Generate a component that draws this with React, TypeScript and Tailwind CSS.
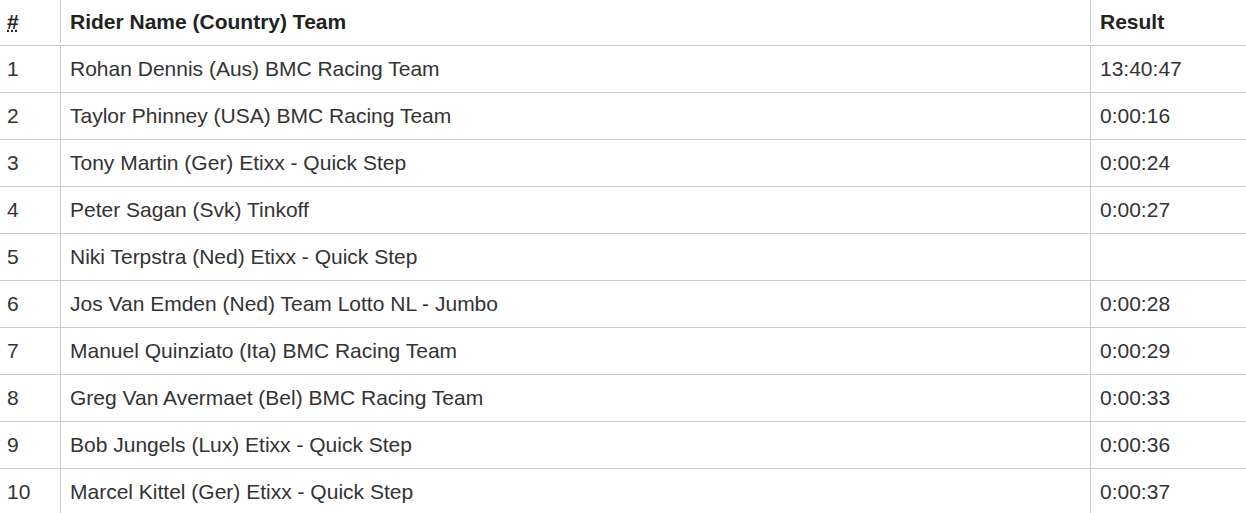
const riders = [
  ["1", "Rohan Dennis (Aus) BMC Racing Team", "13:40:47"],
  ["2", "Taylor Phinney (USA) BMC Racing Team", "0:00:16"],
  ["3", "Tony Martin (Ger) Etixx - Quick Step", "0:00:24"],
  ["4", "Peter Sagan (Svk) Tinkoff", "0:00:27"],
  ["5", "Niki Terpstra (Ned) Etixx - Quick Step", ""],
  ["6", "Jos Van Emden (Ned) Team Lotto NL - Jumbo", "0:00:28"],
  ["7", "Manuel Quinziato (Ita) BMC Racing Team", "0:00:29"],
  ["8", "Greg Van Avermaet (Bel) BMC Racing Team", "0:00:33"],
  ["9", "Bob Jungels (Lux) Etixx - Quick Step", "0:00:36"],
  ["10", "Marcel Kittel (Ger) Etixx - Quick Step", "0:00:37"],
];

export default function App() {
  return (
    <div className="h-[513px] w-[1246px] overflow-hidden bg-white font-['Liberation_Sans',Arial,sans-serif] text-[21px] text-[#333]">
      <div className="flex h-[46px] border-b border-[#ccc] pb-[2px] font-bold text-[#222]">
        <div className="flex w-[61px] items-center border-r border-[#ccc] pl-[7px]">
          <abbr title="Position" className="underline decoration-dotted">#</abbr>
        </div>
        <div className="flex w-[1030px] items-center border-r border-[#ccc] pl-[9px]">
          Rider Name (Country) Team
        </div>
        <div className="flex flex-1 items-center pl-[9px]">Result</div>
      </div>
      {riders.map(([pos, name, result]) => (
        <div key={pos} className="flex h-[47px] border-b border-[#ccc]">
          <div className="flex w-[61px] items-center border-r border-[#ccc] pl-[7px]">{pos}</div>
          <div className="flex w-[1030px] items-center border-r border-[#ccc] pl-[9px]">{name}</div>
          <div className="flex flex-1 items-center pl-[9px]">{result}</div>
        </div>
      ))}
    </div>
  );
}
